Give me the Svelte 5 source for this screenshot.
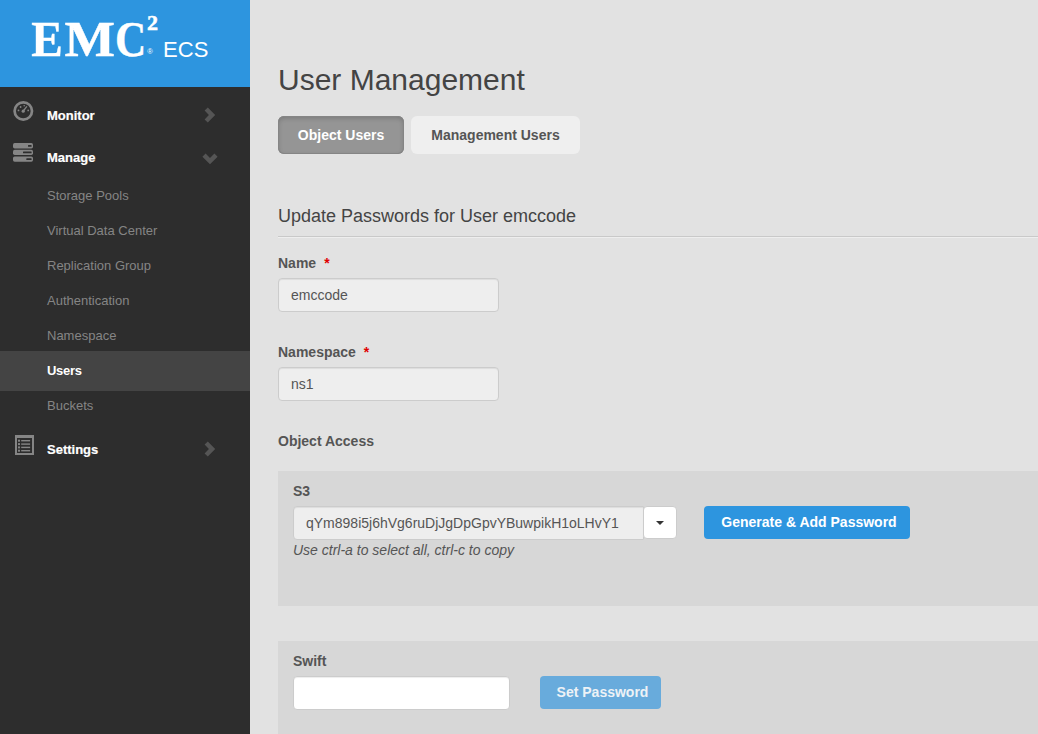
<script>
  const manageItems = [
    'Storage Pools',
    'Virtual Data Center',
    'Replication Group',
    'Authentication',
    'Namespace',
    'Users',
    'Buckets'
  ];
  const current = 'Users';
  const fields = [
    { label: 'Name', value: 'emccode' },
    { label: 'Namespace', value: 'ns1' }
  ];
</script>

{#snippet chevron(down)}
  <svg class="chevron" class:down width="12" height="16" viewBox="0 0 12 16">
    <path d="M0.6 3.6 3.8 0.4 11.2 8 3.8 15.6 0.6 12.4 4.9 8Z" fill="#555" />
  </svg>
{/snippet}

<div class="page">
  <aside>
    <header>
      <svg width="250" height="87" viewBox="0 0 250 87" fill="#fff">
        <g class="logo">
          <text transform="translate(31.3 56) scale(.92 1)">E</text>
          <text transform="translate(64.5 56) scale(1.04 1)">M</text>
          <text transform="translate(115 56) scale(.84 1)">C</text>
        </g>
        <text x="147" y="30" class="sup">2</text>
        <text x="147.2" y="53.5" class="reg">®</text>
        <text x="163" y="57" class="ecs" textLength="45.5">ECS</text>
      </svg>
    </header>
    <nav>
      <div class="group monitor">
        <svg class="icon" width="22" height="22" viewBox="0 0 22 22">
          <circle cx="11.3" cy="11" r="8.7" fill="none" stroke="#858585" stroke-width="2.7" />
          <g fill="#858585">
            <circle cx="6.5" cy="10.4" r=".9" /><circle cx="8.6" cy="7" r=".9" />
            <circle cx="12.2" cy="5.8" r=".8" /><circle cx="16.2" cy="10.4" r=".9" />
            <circle cx="11.2" cy="11.2" r="1.6" />
          </g>
          <path d="M11.3 11 14.9 6.3" stroke="#858585" stroke-width="1.3" />
        </svg>
        <span>Monitor</span>
        {@render chevron(false)}
      </div>
      <div class="group manage">
        <svg class="icon" width="22" height="20" viewBox="0 0 22 20">
          <g fill="#858585">
            <rect x="1" y="0" width="20" height="5.4" rx="1.7" />
            <rect x="1" y="6.8" width="20" height="5.2" rx="1.7" />
            <rect x="1" y="13.4" width="20" height="5.3" rx="1.7" />
          </g>
          <g fill="#2d2d2d">
            <rect x="16" y="2" width="3.6" height="1.7" rx=".5" />
            <rect x="11" y="8.5" width="8.6" height="1.7" rx=".5" />
            <rect x="14.3" y="15.2" width="5.3" height="1.7" rx=".5" />
          </g>
        </svg>
        <span>Manage</span>
        {@render chevron(true)}
      </div>
      <ul>
        {#each manageItems as item}
          <li class:current={item === current}>{item}</li>
        {/each}
      </ul>
      <div class="group settings">
        <svg class="icon" width="22" height="21" viewBox="0 0 22 21">
          <path d="M3 0H22V20H3ZM5 3V18H20V3Z" fill="#858585" fill-rule="evenodd" />
          <g fill="#858585">
            <rect x="6" y="4.7" width="2" height="2" /><rect x="9.2" y="5" width="8.9" height="1.4" />
            <rect x="6" y="8.1" width="2" height="2" /><rect x="9.2" y="8.4" width="8.9" height="1.4" />
            <rect x="6" y="11.4" width="2" height="2" /><rect x="9.2" y="11.7" width="8.9" height="1.4" />
            <rect x="6" y="14.7" width="2" height="2" /><rect x="9.2" y="15" width="8.9" height="1.4" />
          </g>
        </svg>
        <span>Settings</span>
        {@render chevron(false)}
      </div>
    </nav>
  </aside>

  <main>
    <h1>User Management</h1>
    <div class="tabs">
      <button class="tab active">Object Users</button>
      <button class="tab">Management Users</button>
    </div>
    <h2>Update Passwords for User emccode</h2>
    {#each fields as f}
      <div class="field">
        <div class="label">{f.label}<b>*</b></div>
        <div class="input">{f.value}</div>
      </div>
    {/each}
    <div class="label">Object Access</div>

    <section class="s3">
      <div class="label">S3</div>
      <div class="row">
        <div class="combo">
          <div class="input">qYm898i5j6hVg6ruDjJgDpGpvYBuwpikH1oLHvY1</div>
          <button class="toggle" aria-label="Show keys"><i></i></button>
        </div>
        <button class="primary">Generate &amp; Add Password</button>
      </div>
      <em>Use ctrl-a to select all, ctrl-c to copy</em>
    </section>

    <section class="swift">
      <div class="label">Swift</div>
      <div class="row">
        <div class="input"></div>
        <button class="primary disabled">Set Password</button>
      </div>
    </section>
  </main>
</div>

<style>
  :global(body) { overflow: hidden; }
  * { box-sizing: border-box; }
  .page {
    display: flex;
    width: 1038px;
    height: 734px;
    overflow: hidden;
    background: #e2e2e2;
    color: #555;
    font: 14px/20px "Liberation Sans", Arial, sans-serif;
  }
  aside { width: 250px; flex: none; background: #2d2d2d; }
  header { height: 87px; background: #2d95df; }
  header svg { display: block; }
  .logo { font: bold 51.5px "Liberation Serif", serif; stroke: #fff; stroke-width: .4px; }
  .sup { font: bold 22px "Liberation Serif", serif; stroke: #fff; stroke-width: .5px; }
  .reg { font: 7.5px "Liberation Sans", sans-serif; }
  .ecs { font: 22px "Liberation Sans", sans-serif; }
  nav { padding-top: 7px; font-size: 13px; }
  .group {
    display: flex;
    height: 42px;
    padding: 0 34px 0 12px;
    align-items: center;
    color: #fff;
    font-weight: bold;
  }
  .group span { flex: 1; margin: 2px 0 0 13px; -webkit-text-stroke: .2px #fff; }
  .icon { flex: none; margin-bottom: 8px; }
  .chevron { margin-top: 0; }
  .chevron.down { transform: rotate(90deg); margin-top: 3px; }
  ul { list-style: none; margin: 0; padding: 0; }
  li { height: 35px; padding: 8px 0 0 47px; color: #858585; }
  li.current { height: 40px; margin-bottom: -5px; padding-top: 10px; margin-top: -2px; background: #444; color: #fff; font-weight: bold; letter-spacing: -.3px; }
  li.current + li { padding-top: 10px; height: 37px; }
  .settings { margin-top: 5px; }
  main { flex: 1; min-width: 0; padding: 63px 0 0 28px; }
  h1 { margin: 0; font-size: 30px; line-height: 34px; font-weight: normal; color: #444; }
  .tabs { display: flex; gap: 7px; margin-top: 19px; }
  button { font: bold 14px/20px "Liberation Sans", Arial, sans-serif; border: 0; margin: 0; padding: 0; white-space: nowrap; }
  .tab { width: 169px; height: 38px; border-radius: 6px; background: #efefef; color: #555; }
  .tab.active { width: 126px; background: #959595; color: #fff; box-shadow: inset 0 0 0 1px #858585, inset 0 2px 5px rgba(0,0,0,.2); }
  h2 {
    margin: 49px 0 16px;
    height: 34px;
    border-bottom: 1px solid #c9c9c9;
    box-shadow: 0 1px #eee;
    font-size: 18px;
    line-height: 26px;
    font-weight: normal;
    color: #444;
  }
  .label { height: 20px; margin-bottom: 5px; font-weight: bold; }
  .label b { margin-left: 8px; color: #e00000; }
  .field { height: 89px; }
  .input {
    width: 221px;
    height: 34px;
    padding: 6px 12px;
    border: 1px solid #ccc;
    border-radius: 4px;
    background: #eee;
    box-shadow: inset 0 1px 1px rgba(0,0,0,.075);
  }
  section { padding: 10px 15px; background: #d7d7d7; }
  .s3 { height: 135px; margin-top: 20px; }
  .swift { height: 135px; margin-top: 35px; }
  .row { display: flex; align-items: flex-start; }
  .combo { display: flex; margin-right: 27px; }
  .combo .input { width: 351px; border-radius: 4px 0 0 4px; }
  .toggle {
    width: 34px;
    height: 33px;
    margin-left: -1px;
    border: 1px solid #ccc;
    border-radius: 4px;
    background: #fff;
    display: flex;
    align-items: center;
    justify-content: center;
  }
  .toggle i { border: 4px solid transparent; border-top-color: #333; border-bottom: 0; }
  .primary { width: 206px; height: 33px; padding: 0 0 1px 4px; border-radius: 4px; background: #2d95df; color: #fff; }
  .primary.disabled { width: 121px; background: #68abdc; color: #edf2f6; }
  .swift .input { width: 217px; margin-right: 30px; background: #fff; }
  em { display: block; }
</style>
